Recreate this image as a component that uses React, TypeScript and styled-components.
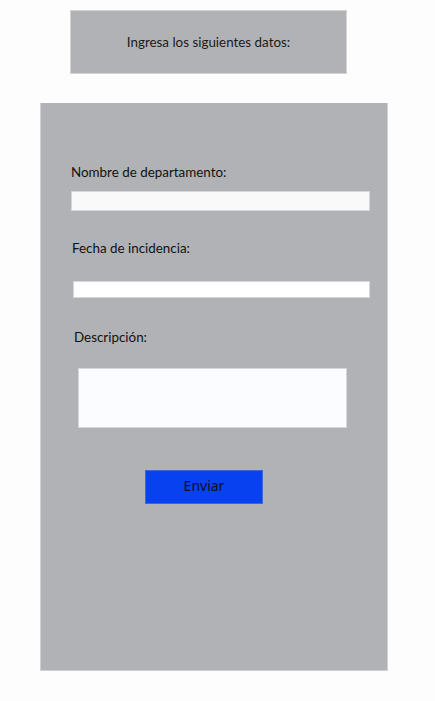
import React from "react";
import styled, { createGlobalStyle } from "styled-components";

const Global = createGlobalStyle`
  html, body { margin: 0; padding: 0; background: #fdfdfd; }
  body { font-family: "Lato", "Noto Sans", sans-serif; }
  * { box-sizing: border-box; }
`;

const Page = styled.div`
  display: flex;
  flex-direction: column;
  padding-top: 10px;
  min-height: 701px;
`;

const Header = styled.div`
  margin-left: 70px;
  width: 277px;
  height: 64px;
  background: #b1b2b6;
  border: 1px solid #d3d4d6;
  display: flex;
  align-items: center;
  justify-content: center;
  font-size: 13.4px;
  color: #1a1a1a;
`;

const Panel = styled.form`
  margin-top: 29px;
  margin-left: 40px;
  width: 348px;
  height: 568px;
  background: #b1b2b6;
  border: 1px solid #d0d1d3;
  border-top: none;
  display: flex;
  flex-direction: column;
  align-items: flex-start;
  padding-top: 59px;
`;

const Label = styled.label<{ $left: number; $top: number }>`
  margin-left: ${(p) => p.$left}px;
  margin-top: ${(p) => p.$top}px;
  font-size: 13.4px;
  line-height: 20px;
  color: #111;
`;

const Input = styled.input<{ $left: number; $top: number; $width: number; $height: number; $bg: string }>`
  margin-left: ${(p) => p.$left}px;
  margin-top: ${(p) => p.$top}px;
  width: ${(p) => p.$width}px;
  height: ${(p) => p.$height}px;
  background: ${(p) => p.$bg};
  border: 1px solid #d6d7da;
  padding: 0;
  outline: none;
`;

const TextArea = styled.textarea`
  margin-left: 37px;
  margin-top: 21px;
  width: 269px;
  height: 60px;
  background: #fbfcff;
  border: 1px solid #d6d7da;
  resize: none;
  padding: 0;
  outline: none;
`;

const Button = styled.button`
  margin-left: 104px;
  margin-top: 42px;
  width: 118px;
  height: 34px;
  background: #0841ef;
  border: 1px solid #3d66d6;
  color: #0a0f2a;
  font-family: "Noto Sans", sans-serif;
  font-size: 14px;
  line-height: 20px;
  padding: 0 0 3px;
  cursor: pointer;
`;

export default function App() {
  return (
    <>
      <Global />
      <Page>
        <Header>Ingresa los siguientes datos:</Header>
        <Panel onSubmit={(e) => e.preventDefault()}>
          <Label $left={30} $top={0}>Nombre de departamento:</Label>
          <Input $left={30} $top={9} $width={299} $height={20} $bg="#f9f9f9" />
          <Label $left={31} $top={27}>Fecha de incidencia:</Label>
          <Input $left={32} $top={23} $width={297} $height={17} $bg="#ffffff" />
          <Label $left={33} $top={29}>Descripción:</Label>
          <TextArea />
          <Button type="submit">Enviar</Button>
        </Panel>
      </Page>
    </>
  );
}
